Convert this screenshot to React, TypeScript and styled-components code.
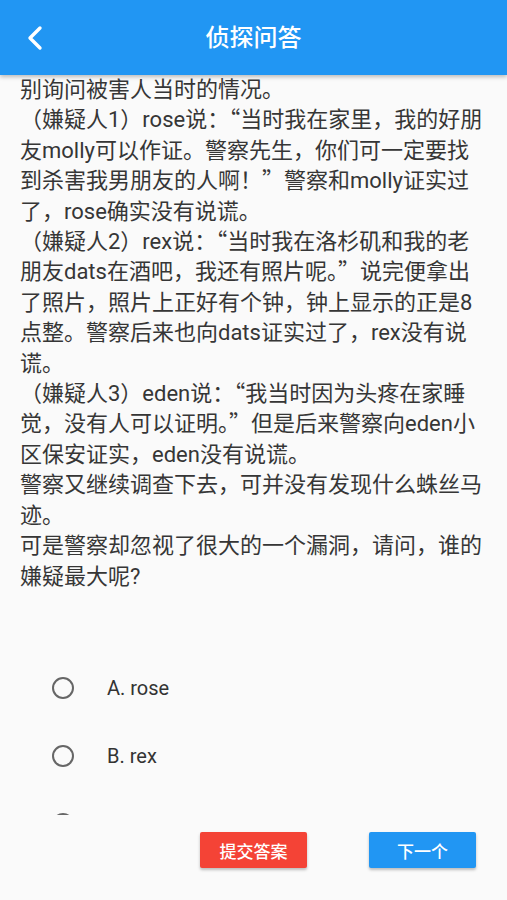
import { createGlobalStyle } from 'styled-components'
import styled from 'styled-components'

const GlobalStyle = createGlobalStyle`
  html, body {
    margin: 0;
    padding: 0;
    background: #fafafa;
  }
  body {
    font-family: Roboto, 'Noto Sans CJK SC', sans-serif;
  }
`

const Page = styled.div`
  width: 507px;
  height: 900px;
  display: flex;
  flex-direction: column;
  background: #fafafa;
  overflow: hidden;
`

const Header = styled.div`
  position: relative;
  z-index: 2;
  height: 75px;
  flex: 0 0 75px;
  background: #2196f3;
  box-shadow: 0px 2px 4px rgba(0, 0, 0, 0.25);
  display: grid;
  grid-template-columns: 70px 1fr 70px;
  align-items: center;
`

const BackButton = styled.div`
  display: flex;
  align-items: center;
  justify-content: flex-start;
  padding-left: 25px;
  height: 100%;
`

const Title = styled.div`
  text-align: center;
  color: #ffffff;
  font-family: 'Noto Sans CJK SC', sans-serif;
  font-size: 24px;
  font-weight: 500;
  padding-bottom: 4px;
`

const Body = styled.div`
  height: 740px;
  flex: 0 0 740px;
  overflow: hidden;
`

const Story = styled.div`
  padding: 0 20px;
  font-family: Roboto, 'Noto Sans CJK SC', sans-serif;
  font-size: 22px;
  line-height: 30.4px;
  color: #363636;
`

const Para = styled.p`
  margin: 0;
`

// curly quotes come from the CJK face, as in the reference
const Quote = styled.span`
  font-family: 'Noto Sans CJK SC', sans-serif;
  line-height: 0;
`

const Options = styled.div`
  margin-top: 62px;
  display: flex;
  flex-direction: column;
`

const Option = styled.label`
  height: 68px;
  display: flex;
  align-items: center;
  padding-left: 52px;
  cursor: pointer;
`

const Radio = styled.span`
  width: 22px;
  height: 22px;
  box-sizing: border-box;
  border: 2px solid #666666;
  border-radius: 50%;
  margin-right: 33px;
`

const OptionText = styled.span`
  font-family: Roboto, 'Noto Sans CJK SC', sans-serif;
  font-size: 20px;
  color: #333333;
`

const Footer = styled.div`
  display: flex;
  justify-content: flex-end;
  gap: 62px;
  padding: 17px 31px 0 0;
`

const Button = styled.div<{ $color: string }>`
  width: 107px;
  height: 36px;
  display: flex;
  align-items: center;
  justify-content: center;
  background: ${(p) => p.$color};
  border-radius: 2px;
  box-shadow: 0px 2px 3px rgba(0, 0, 0, 0.25);
  color: #ffffff;
  font-family: 'Noto Sans CJK SC', sans-serif;
  font-size: 17px;
  font-weight: 500;
  cursor: pointer;
`

const paragraphs = [
  '别询问被害人当时的情况。',
  '（嫌疑人1）rose说：“当时我在家里，我的好朋友molly可以作证。警察先生，你们可一定要找到杀害我男朋友的人啊！”警察和molly证实过了，rose确实没有说谎。',
  '（嫌疑人2）rex说：“当时我在洛杉矶和我的老朋友dats在酒吧，我还有照片呢。”说完便拿出了照片，照片上正好有个钟，钟上显示的正是8点整。警察后来也向dats证实过了，rex没有说谎。',
  '（嫌疑人3）eden说：“我当时因为头疼在家睡觉，没有人可以证明。”但是后来警察向eden小区保安证实，eden没有说谎。',
  '警察又继续调查下去，可并没有发现什么蛛丝马迹。',
  '可是警察却忽视了很大的一个漏洞，请问，谁的嫌疑最大呢?',
]

const options = ['A. rose', 'B. rex', 'C. eden']

const renderText = (t: string) =>
  t.split(/([“”])/).map((part, i) =>
    part === '“' || part === '”' ? <Quote key={i}>{part}</Quote> : part
  )

const App = () => {
  return (
    <Page>
      <GlobalStyle />
      <Header>
        <BackButton>
          <svg width="20" height="26" viewBox="0 0 20 26">
            <polyline
              points="15,3 5,13 15,23"
              fill="none"
              stroke="#ffffff"
              strokeWidth="3.4"
              strokeLinecap="round"
              strokeLinejoin="round"
            />
          </svg>
        </BackButton>
        <Title>侦探问答</Title>
        <div />
      </Header>
      <Body>
        <Story>
          {paragraphs.map((t, i) => (
            <Para key={i}>{renderText(t)}</Para>
          ))}
        </Story>
        <Options>
          {options.map((o) => (
            <Option key={o}>
              <Radio />
              <OptionText>{o}</OptionText>
            </Option>
          ))}
        </Options>
      </Body>
      <Footer>
        <Button $color="#f44336">提交答案</Button>
        <Button $color="#2196f3">下一个</Button>
      </Footer>
    </Page>
  )
}

export default App
